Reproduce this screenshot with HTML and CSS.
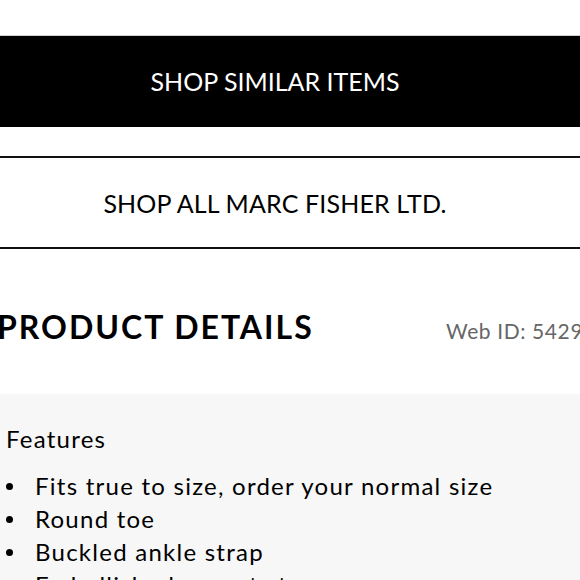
FILE: index.html
```html
<!DOCTYPE html>
<html>
<head>
<meta charset="utf-8">
<link rel="stylesheet" href="styles.css">
</head>
<body>
<div class="page">
  <a class="btn btn-similar">SHOP SIMILAR ITEMS</a>
  <a class="btn btn-all">SHOP ALL MARC FISHER LTD.</a>
  <div class="details-head">
    <h2 class="details-title">PRODUCT DETAILS</h2>
    <span class="web-id">Web ID: 5429184</span>
  </div>
  <div class="panel">
    <div class="panel-title">Features</div>
    <ul class="features">
      <li>Fits true to size, order your normal size</li>
      <li>Round toe</li>
      <li>Buckled ankle strap</li>
      <li>Embellished accent strap</li>
    </ul>
  </div>
</div>
</body>
</html>
```
FILE: styles.css
```css
html, body {
  margin: 0;
  padding: 0;
  background: #fff;
}
body {
  font-family: Lato, "Open Sans", sans-serif;
  color: #000;
  overflow: hidden;
  width: 580px;
  height: 580px;
}
.page {
  padding-top: 35px;
}
.btn {
  display: flex;
  align-items: center;
  justify-content: center;
  text-decoration: none;
  font-size: 25px;
  letter-spacing: 0;
  padding-right: 30px;
}
.btn-similar {
  border-top: 1px solid #cfcfcf;
  height: 92px;
  padding-bottom: 2px;
  box-sizing: border-box;
  background: #000;
  color: #fff;
}
.btn-all {
  margin-top: 29px;
  height: 89px;
  border-top: 2px solid #111;
  border-bottom: 2px solid #111;
  color: #000;
  letter-spacing: 0.15px;
}
.details-head {
  display: flex;
  align-items: baseline;
  justify-content: space-between;
  height: 145px;
  box-sizing: border-box;
  padding-top: 58px;
  margin-left: -3px;
  white-space: nowrap;
}
.details-title {
  margin: 0;
  font-size: 32px;
  font-weight: 700;
  letter-spacing: 2px;
}
.web-id {
  font-size: 21px;
  letter-spacing: 0.6px;
  color: #666;
  width: 134px;
  overflow: hidden;
}
.panel {
  background: #f7f7f7;
  padding: 28px 0 0 6px;
  height: 400px;
  letter-spacing: 1.25px;
}
.panel-title {
  font-size: 24px;
  line-height: 33px;
}
.features {
  list-style: none;
  margin: 14px 0 0 0;
  padding: 0;
  font-size: 24px;
  line-height: 33px;
}
.features li {
  white-space: nowrap;
}
.features li::before {
  content: "";
  display: inline-block;
  width: 7px;
  height: 7px;
  border-radius: 50%;
  background: #000;
  margin-right: 22px;
  vertical-align: 5px;
}
```
